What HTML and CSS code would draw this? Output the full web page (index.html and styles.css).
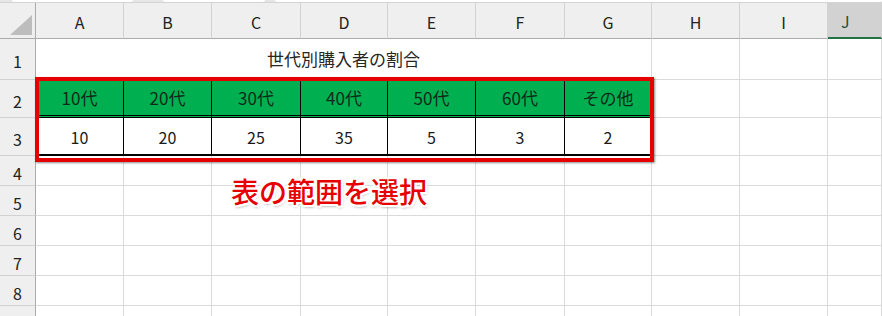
FILE: index.html
```html
<!DOCTYPE html>
<html lang="ja">
<head>
    <meta charset="UTF-8">
    <title>世代別購入者の割合</title>
    <link rel="stylesheet" href="styles.css">
</head>
<body>

    <!-- Bottom edge of the formula bar -->
    <div class="topbar">
        <span class="bar-box name-box"></span>
        <span class="bar-box fx-box"></span>
        <span class="bar-box formula-box"></span>
    </div>

    <div class="workbook">
        <!-- Sheet grid -->
        <div class="sheet">
            <!-- Column headers -->
            <div class="corner"><span class="corner-tri"></span></div>
            <div class="col-head">A</div>
            <div class="col-head">B</div>
            <div class="col-head">C</div>
            <div class="col-head">D</div>
            <div class="col-head">E</div>
            <div class="col-head">F</div>
            <div class="col-head">G</div>
            <div class="col-head">H</div>
            <div class="col-head">I</div>
            <div class="col-head active">J</div>

            <!-- Row 1: title centred across A:G -->
            <div class="row-head">1</div>
            <div class="cell title">世代別購入者の割合</div>
            <div class="cell"></div>
            <div class="cell"></div>
            <div class="cell"></div>

            <!-- Row 2: age groups -->
            <div class="row-head">2</div>
            <div class="cell head">10代</div>
            <div class="cell head">20代</div>
            <div class="cell head">30代</div>
            <div class="cell head">40代</div>
            <div class="cell head">50代</div>
            <div class="cell head">60代</div>
            <div class="cell head">その他</div>
            <div class="cell"></div>
            <div class="cell"></div>
            <div class="cell"></div>

            <!-- Row 3: counts -->
            <div class="row-head">3</div>
            <div class="cell num">10</div>
            <div class="cell num">20</div>
            <div class="cell num">25</div>
            <div class="cell num">35</div>
            <div class="cell num">5</div>
            <div class="cell num">3</div>
            <div class="cell num">2</div>
            <div class="cell"></div>
            <div class="cell"></div>
            <div class="cell"></div>

            <div class="row-head">4</div>
            <div class="cell"></div><div class="cell"></div><div class="cell"></div><div class="cell"></div><div class="cell"></div>
            <div class="cell"></div><div class="cell"></div><div class="cell"></div><div class="cell"></div><div class="cell"></div>

            <div class="row-head">5</div>
            <div class="cell"></div><div class="cell"></div><div class="cell"></div><div class="cell"></div><div class="cell"></div>
            <div class="cell"></div><div class="cell"></div><div class="cell"></div><div class="cell"></div><div class="cell"></div>

            <div class="row-head">6</div>
            <div class="cell"></div><div class="cell"></div><div class="cell"></div><div class="cell"></div><div class="cell"></div>
            <div class="cell"></div><div class="cell"></div><div class="cell"></div><div class="cell"></div><div class="cell"></div>

            <div class="row-head">7</div>
            <div class="cell"></div><div class="cell"></div><div class="cell"></div><div class="cell"></div><div class="cell"></div>
            <div class="cell"></div><div class="cell"></div><div class="cell"></div><div class="cell"></div><div class="cell"></div>

            <div class="row-head">8</div>
            <div class="cell"></div><div class="cell"></div><div class="cell"></div><div class="cell"></div><div class="cell"></div>
            <div class="cell"></div><div class="cell"></div><div class="cell"></div><div class="cell"></div><div class="cell"></div>

            <div class="row-head">9</div>
            <div class="cell"></div><div class="cell"></div><div class="cell"></div><div class="cell"></div><div class="cell"></div>
            <div class="cell"></div><div class="cell"></div><div class="cell"></div><div class="cell"></div><div class="cell"></div>
        </div>

        <!-- Red frame shape drawn over the table -->
        <div class="range-frame"></div>

        <!-- Callout text box -->
        <div class="callout">表の範囲を選択</div>
    </div>

</body>
</html>
```

FILE: styles.css
```css
/* Page reset */
body, html {
    margin: 0;
    padding: 0;
    background-color: #ffffff;
    font-family: "Noto Sans CJK JP", "Noto Sans", sans-serif;
    overflow: hidden;
}

/* Formula bar edge */
.topbar {
    display: flex;
    height: 3px;
    background-color: #e6e6e6;
    border-bottom: 1px solid #d4d4d4;
    box-sizing: border-box;
}

.bar-box {
    background-color: #ffffff;
    border-radius: 0 0 3px 3px;
}

.name-box {
    width: 121px;
    margin-left: 12px;
}

.fx-box {
    width: 102px;
    margin-left: 30px;
}

.formula-box {
    flex: 1;
    margin-left: 10px;
}

.workbook {
    position: relative;
}

/* Grid of the worksheet */
.sheet {
    display: grid;
    grid-template-columns: 36px 88px 88px 89px 87px 88px 89px 87px 88px 88px 1fr;
    grid-template-rows: 36px 41px 38px 38px 30px 30px 30px 30px 30px 30px;
}

.corner,
.col-head,
.row-head,
.cell {
    box-sizing: border-box;
    display: flex;
    align-items: center;
    justify-content: center;
}

/* Column headers */
.col-head {
    background-color: #efefef;
    border-right: 1px solid #d2d2d2;
    border-bottom: 1px solid #ababab;
    color: #222222;
    font-size: 16px;
    padding-top: 2px;
}

.col-head.active {
    background-color: #d2d2d2;
    border-bottom: 2px solid #217346;
    color: #1e4f33;
    justify-content: flex-start;
    padding-left: 13px;
}

.corner {
    background-color: #efefef;
    border-right: 1px solid #ababab;
    border-bottom: 1px solid #ababab;
    align-items: flex-end;
    justify-content: flex-end;
    padding: 0 3px 3px 0;
}

.corner-tri {
    width: 22px;
    height: 20px;
    background-color: #bdbdbd;
    clip-path: polygon(100% 0, 100% 100%, 0 100%);
}

/* Row headers */
.row-head {
    background-color: #efefef;
    border-right: 1px solid #ababab;
    border-bottom: 1px solid #d2d2d2;
    color: #222222;
    font-size: 16px;
    padding-top: 4px;
}

/* Cells */
.cell {
    border-right: 1px solid #dadada;
    border-bottom: 1px solid #dadada;
    color: #1a1a1a;
    font-size: 16px;
}

.cell.title {
    grid-column: span 7;
    font-size: 17px;
    color: #262626;
    padding-bottom: 2px;
}

.cell.head {
    background-color: #00b050;
    border-right: 1px solid #000000;
    border-bottom: 3px double #000000;
    font-size: 17px;
    color: #0f2a17;
}

.cell.num {
    border-right: 1px solid #000000;
    border-bottom: 2px solid #000000;
    font-size: 16px;
    padding-top: 1px;
}

/* Red selection frame */
.range-frame {
    position: absolute;
    left: 35px;
    top: 74px;
    width: 619px;
    height: 85px;
    box-sizing: border-box;
    border: 4px solid #e60000;
    box-shadow: 1px 1px 2px rgba(0, 0, 0, 0.45);
}

/* Callout label */
.callout {
    position: absolute;
    left: 231px;
    top: 172px;
    font-size: 28px;
    line-height: 1.2;
    font-weight: 500;
    color: #e60000;
    text-shadow:
        -2px 0 0 #ffffff, 2px 0 0 #ffffff,
        0 -2px 0 #ffffff, 0 2px 0 #ffffff,
        -2px -2px 0 #ffffff, 2px 2px 0 #ffffff,
        -2px 2px 0 #ffffff, 2px -2px 0 #ffffff,
        1px 2px 3px rgba(0, 0, 0, 0.5);
}
```
